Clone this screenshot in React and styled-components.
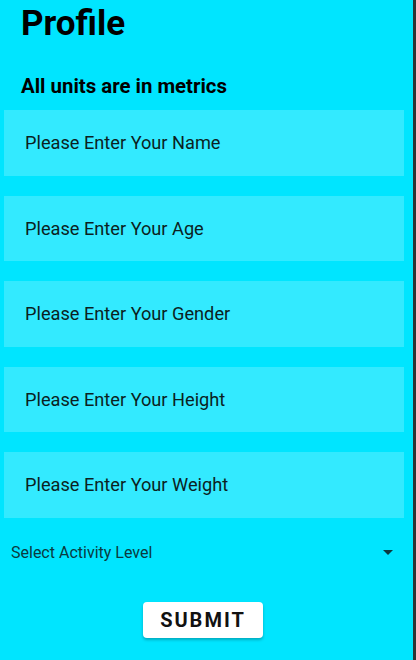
import React from "react";
import styled, { createGlobalStyle } from "styled-components";

const Global = createGlobalStyle`
  html, body { margin: 0; padding: 0; background: #00e5ff; }
  body { font-family: Roboto, "Noto Sans", sans-serif; }
  * { box-sizing: border-box; }
`;

const Page = styled.div`
  width: 416px;
  height: 660px;
  background: #00e5ff;
  border-right: 3px solid #2e3335;
  display: flex;
  flex-direction: column;
  overflow: hidden;
`;

const Title = styled.h1`
  margin: 0;
  padding: 3px 0 0 21px;
  height: 48px;
  font-size: 35px;
  font-weight: 700;
  line-height: 42px;
  color: #000;
`;

const Subtitle = styled.h2`
  margin: 0;
  padding: 25px 0 0 21px;
  height: 62px;
  font-size: 20.4px;
  font-weight: 700;
  line-height: 26px;
  color: #000;
`;

const Fields = styled.div`
  display: flex;
  flex-direction: column;
  gap: 20px;
  padding: 0 9px 0 4px;
`;

const Field = styled.input`
  height: 65.5px;
  width: 100%;
  border: none;
  outline: none;
  background: #33eaff;
  padding: 0 21px;
  font-family: Roboto, sans-serif;
  font-size: 18.2px;
  color: #0b1f22;
  &::placeholder { color: #0b1f22; opacity: 1; }
`;

const SelectRow = styled.div`
  display: flex;
  align-items: center;
  justify-content: space-between;
  height: 70px;
  padding: 0 20px 0 11px;
  font-size: 16px;
  color: #0b3a40;
`;

const Caret = styled.span`
  width: 0;
  height: 0;
  border-left: 5px solid transparent;
  border-right: 5px solid transparent;
  border-top: 5px solid #0b3a40;
`;

const ButtonRow = styled.div`
  display: flex;
  justify-content: center;
  padding-top: 14px;
  padding-right: 7px;
`;

const Button = styled.button`
  width: 120px;
  height: 36px;
  background: #fff;
  border: none;
  border-radius: 4px;
  box-shadow: 0 2px 3px rgba(0, 0, 0, 0.25);
  font-family: Roboto, sans-serif;
  font-weight: 700;
  font-size: 20px;
  letter-spacing: 2px;
  color: #111;
  padding: 0;
`;

const placeholders = [
  "Please Enter Your Name",
  "Please Enter Your Age",
  "Please Enter Your Gender",
  "Please Enter Your Height",
  "Please Enter Your Weight",
];

export default function App() {
  return (
    <>
      <Global />
      <Page>
        <Title>Profile</Title>
        <Subtitle>All units are in metrics</Subtitle>
        <Fields>
          {placeholders.map((p) => (
            <Field key={p} placeholder={p} />
          ))}
        </Fields>
        <SelectRow>
          <span>Select Activity Level</span>
          <Caret />
        </SelectRow>
        <ButtonRow>
          <Button>SUBMIT</Button>
        </ButtonRow>
      </Page>
    </>
  );
}
